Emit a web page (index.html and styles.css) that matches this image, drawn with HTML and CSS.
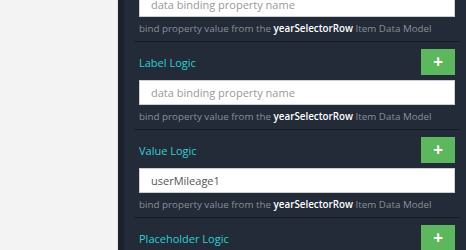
FILE: index.html
```html
<!DOCTYPE html>
<html>
<head>
<meta charset="utf-8">
<link rel="stylesheet" href="styles.css">
</head>
<body>
<div class="layout">
  <div class="canvas"></div>
  <div class="gutter"></div>
  <div class="panel">
    <div class="section first">
      <input class="field" type="text" placeholder="data binding property name">
      <div class="help">bind property value from the <b>yearSelectorRow</b> Item Data Model</div>
    </div>
    <div class="section">
      <div class="head">
        <span class="label">Label Logic</span>
        <button class="add">+</button>
      </div>
      <input class="field" type="text" placeholder="data binding property name">
      <div class="help">bind property value from the <b>yearSelectorRow</b> Item Data Model</div>
    </div>
    <div class="section">
      <div class="head">
        <span class="label">Value Logic</span>
        <button class="add">+</button>
      </div>
      <input class="field" type="text" value="userMileage1">
      <div class="help">bind property value from the <b>yearSelectorRow</b> Item Data Model</div>
    </div>
    <div class="section">
      <div class="head">
        <span class="label">Placeholder Logic</span>
        <button class="add">+</button>
      </div>
      <input class="field" type="text" placeholder="data binding property name">
      <div class="help">bind property value from the <b>yearSelectorRow</b> Item Data Model</div>
    </div>
  </div>
</div>
</body>
</html>
```
FILE: styles.css
```css
html, body {
  margin: 0;
  padding: 0;
  height: 250px;
  overflow: hidden;
  font-family: "Open Sans", sans-serif;
}
.layout {
  display: flex;
  height: 250px;
}
.canvas {
  width: 117px;
  background: #f3f3f3;
  border-right: 1px solid #e4e4e4;
}
.gutter {
  width: 6px;
  background: #1c212b;
}
.panel {
  flex: 1;
  background: #232a38;
  padding: 0 6px 0 10px;
  overflow: hidden;
}
.section {
  border-top: 1px solid #181c26;
  padding: 7px 5px 5px;
  display: flex;
  flex-direction: column;
}
.section.first {
  border-top: none;
  margin-top: -8px;
  padding-top: 0;
}
.head {
  display: flex;
  justify-content: space-between;
  align-items: center;
  height: 26px;
  margin-bottom: 5px;
}
.label {
  color: #29d2d6;
  font-size: 11px;
}
.add {
  width: 34px;
  height: 26px;
  border: none;
  background: #5cb85c;
  color: #fff;
  font-family: "Open Sans", sans-serif;
  font-size: 17px;
  font-weight: 700;
  line-height: 26px;
  padding: 0;
}
.field {
  height: 25px;
  box-sizing: border-box;
  border: 1px solid #cfcfcf;
  background: #fff;
  padding: 0 11px;
  font-family: "Open Sans", sans-serif;
  font-size: 11px;
  color: #555;
  outline: none;
}
.field::placeholder {
  color: #999;
}
.help {
  margin-top: 5px;
  line-height: 14px;
  font-size: 9.8px;
  color: #8a8f99;
  white-space: nowrap;
}
.help b {
  color: #fff;
  font-weight: 600;
}
```
